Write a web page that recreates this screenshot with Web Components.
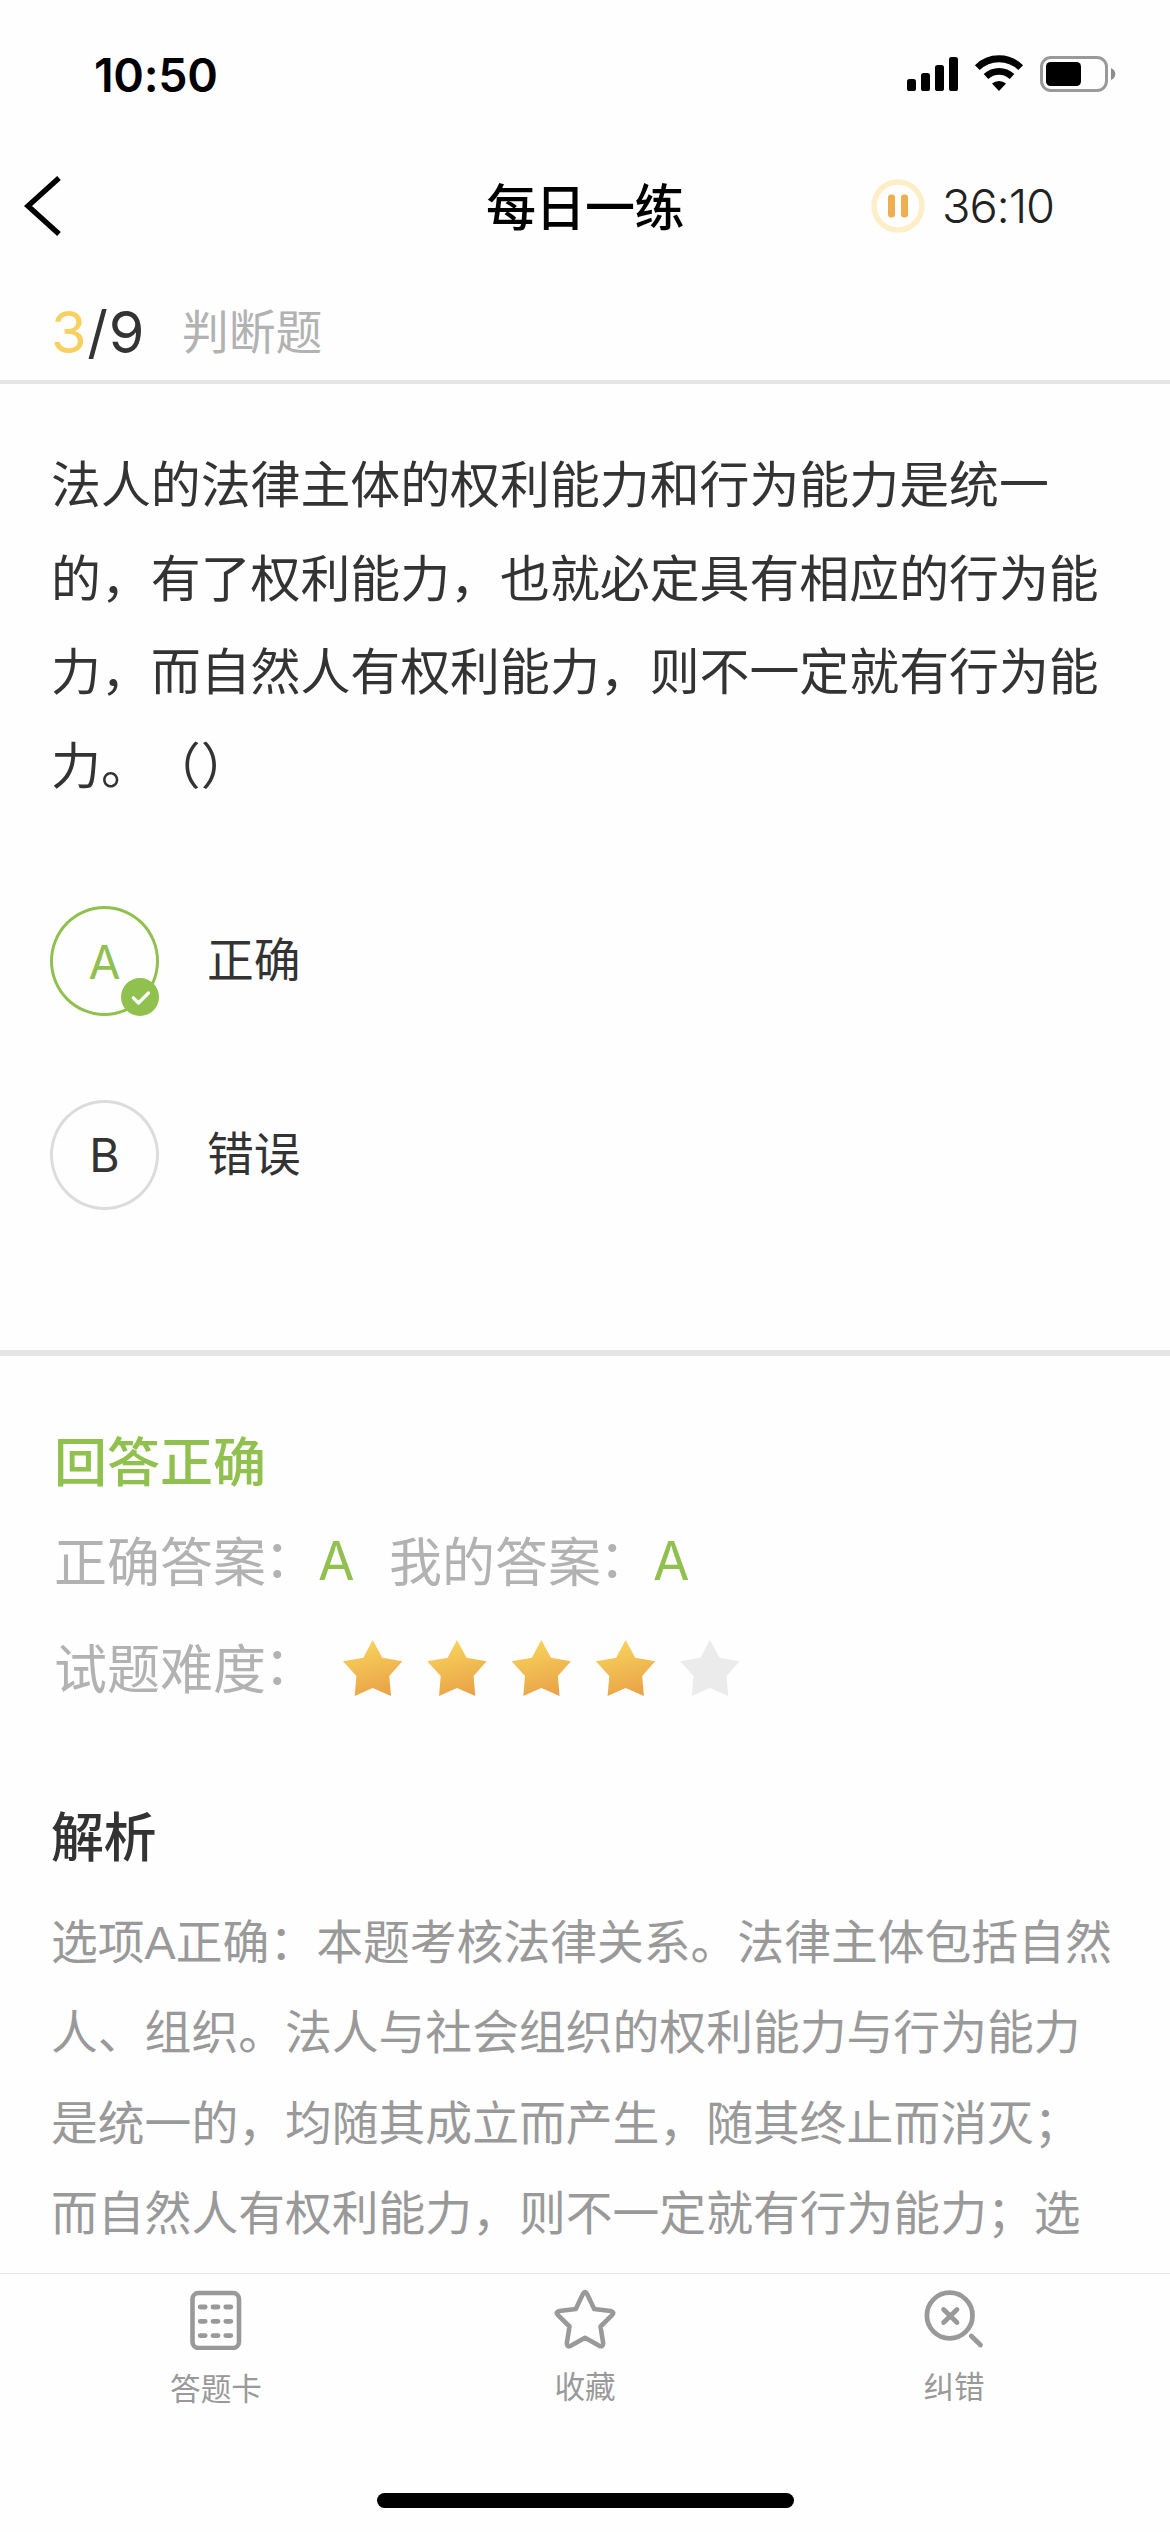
<!DOCTYPE html>
<html lang="zh-CN">
<head>
<meta charset="utf-8">
<title>每日一练</title>
<style>
html,body{margin:0;padding:0}
body{width:1170px;height:2532px;overflow:hidden;background:#fefefe;color:#333;font-family:Inter,"Noto Sans CJK SC",sans-serif}
</style>
</head>
<body>
<quiz-page></quiz-page>
<script>
function define(name, html) {
  const t = document.createElement('template');
  t.innerHTML = html;
  customElements.define(name, class extends HTMLElement {
    constructor() {
      super();
      this.attachShadow({mode: 'open'}).appendChild(t.content.cloneNode(true));
    }
  });
}

define('status-bar', `
<style>
:host{display:flex;justify-content:space-between;align-items:center;box-sizing:border-box;height:148px;padding:0 54px 0 94px;color:#000}
.time{font-size:46.5px;font-weight:600;line-height:60px;letter-spacing:-.3px;padding-top:1px}
svg{display:block}
</style>
<span class="time"><slot></slot></span>
<svg width="210" height="38" viewBox="906 55 210 38">
  <g fill="#000">
    <rect x="907" y="79" width="9" height="12" rx="2.6"/><rect x="921" y="73" width="9" height="18" rx="2.6"/>
    <rect x="935" y="65" width="9" height="26" rx="2.6"/><rect x="949" y="57" width="9" height="34" rx="2.6"/>
    <path d="M999 91 L992 83.6 A10.5 10.5 0 0 1 1006 83.6Z"/>
  </g>
  <g fill="none" stroke="#000" stroke-width="6.8">
    <path d="M986 76.5 A19 19 0 0 1 1012 76.5"/>
    <path d="M977.3 67.6 A31 31 0 0 1 1020.7 67.6"/>
  </g>
  <rect x="1041.5" y="57.5" width="65" height="33" rx="9.5" fill="none" stroke="#999" stroke-width="3"/>
  <rect x="1046" y="62" width="35" height="24" rx="4.5" fill="#000"/>
  <path d="M1111 68 Q1115.3 70 1115.3 74 T1111 80Z" fill="#8c8c8c"/>
</svg>`);

define('nav-bar', `
<style>
:host{display:grid;grid-template-columns:1fr auto 1fr;align-items:center;height:116px}
svg{display:block}
.back{padding-left:20px}
.title{font-size:50px;font-weight:500;line-height:60px;color:#000;letter-spacing:-.5px;padding-top:3px}
.timer{display:flex;align-items:center;gap:17px;padding-left:187px;font-size:47px;line-height:60px;color:#222;font-weight:350;letter-spacing:-1.1px}
</style>
<div class="back"><svg width="44" height="64" viewBox="20 174 44 64"><path d="M59 178 L28 206 L59 234" fill="none" stroke="#000" stroke-width="5.4"/></svg></div>
<div class="title"><slot></slot></div>
<div class="timer">
  <svg width="54" height="54" viewBox="0 0 54 54"><circle cx="27" cy="27" r="24" fill="none" stroke="#fdeec8" stroke-width="5.4"/><rect x="17" y="15.5" width="7" height="23" rx="3" fill="#eeb04f"/><rect x="30" y="15.5" width="7" height="23" rx="3" fill="#eeb04f"/></svg>
  <slot name="time"></slot>
</div>`);

define('question-counter', `
<style>
:host{display:flex;align-items:center;box-sizing:border-box;height:120px;padding:19px 0 0 51px;border-bottom:4px solid #e5e5e5}
.n{font-size:57.5px;font-weight:400;line-height:70px;white-space:nowrap;letter-spacing:.8px;width:96px}
::slotted([slot=current]){color:#f7d060}
.kind{font-size:46.8px;line-height:60px;color:#b2b2b2;margin-left:35px}
</style>
<div class="n"><slot name="current"></slot>/<slot name="total"></slot></div><div class="kind"><slot></slot></div>`);

define('question-text', `
<style>:host{display:block;width:1064px;padding:55px 0 0 51px;font-size:49.9px;line-height:93.7px;height:467px;text-spacing-trim:space-all}</style><slot></slot>`);

define('answer-option', `
<style>
:host{display:flex;align-items:center;gap:48px;height:110px;padding-left:50px;margin-bottom:83.5px;font-size:46.8px;line-height:60px}
.ring{position:relative;box-sizing:border-box;width:109px;height:110px;border:3px solid #dcdcdc;border-radius:50%;display:flex;align-items:center;justify-content:center;font-size:46.5px;padding-top:1px}
:host([correct]) .ring{border-color:#90c04e;color:#90c04e}
.label{padding-bottom:2px}
svg{display:none;position:absolute;right:-3px;bottom:-3px}
:host([correct]) svg{display:block}
</style>
<div class="ring"><slot name="key"></slot><svg width="38" height="38" viewBox="0 0 38 38"><circle cx="19" cy="19" r="19" fill="#90c04e"/><path d="M12.3 19.8 L17.5 25 L27.5 15" fill="none" stroke="#fff" stroke-width="3.3" stroke-linecap="round" stroke-linejoin="round"/></svg></div>
<span class="label"><slot></slot></span>`);

define('star-rating', `
<style>:host{display:block}svg{display:block}</style>
<svg width="398" height="60" viewBox="0 0 398 60">
<defs><linearGradient id="g" x1=".35" y1="0" x2=".65" y2="1"><stop offset="0" stop-color="#f8d45d"/><stop offset="1" stop-color="#e9a246"/></linearGradient>
<path id="s" d="M29.7 1 L39.3 18.7 L59.3 22.3 L46.3 37 L48 57 L29.7 49 L11.7 57 L13.4 37 L0 22.3 L20.3 18.7Z"/></defs>
<use href="#s" fill="url(#g)"/><use href="#s" x="84.3" fill="url(#g)"/><use href="#s" x="168.6" fill="url(#g)"/><use href="#s" x="252.9" fill="url(#g)"/><use href="#s" x="337.2" fill="#ebebeb"/>
</svg>`);

define('answer-result', `
<style>
:host{display:block;box-sizing:border-box;height:424px;border-top:6px solid #e5e5e5;padding:63px 0 0 54px;font-size:53px;color:#b2b2b2;text-spacing-trim:space-all}
div{display:flex;align-items:center;height:80px;white-space:nowrap}
.state{color:#90c04e;font-weight:500}
.answers{margin-top:20px}
.level{margin-top:27px}
i{font-style:normal;transform:translate(-2px,-4px)}
b{font-weight:400;color:#90c04e;width:36px;margin:4px 35px 0 -1px}
star-rating{margin:6px 0 0 24px}
</style>
<div class="state"><slot name="state"></slot></div>
<div class="answers">正确答案<i>：</i><b><slot name="right"></slot></b>我的答案<i>：</i><b><slot name="mine"></slot></b></div>
<div class="level">试题难度<i>：</i><star-rating></star-rating></div>`);

define('answer-analysis', `
<style>
:host{display:block;padding:24px 0 0 51px;text-spacing-trim:space-all}
h2{margin:0;font-size:53px;line-height:80px;font-weight:500;color:#333;letter-spacing:-.5px}
p{margin:20px 0 0;width:1070px;font-family:"Liberation Sans","Noto Sans CJK SC",sans-serif;font-size:46.8px;line-height:90.4px;color:#999}
</style>
<h2>解析</h2><p><slot></slot></p>`);

define('analysis-text', `
<style>:host{display:inline;font-family:"Liberation Sans","Noto Sans CJK SC",sans-serif}</style><slot></slot>`);

define('tab-item', `
<style>
:host{display:flex;flex-direction:column;align-items:center;font-size:30.6px;line-height:40px;color:#999}
.icon{height:61px;margin-bottom:17.5px}
</style>
<div class="icon"><slot name="icon"></slot></div><slot></slot>`);

define('tab-bar', `
<style>
:host{display:flex;flex-direction:column;align-items:center;box-sizing:border-box;height:259px;border-top:1px solid #e5e5e5;background:#fefefe}
nav{display:grid;grid-template-columns:repeat(3,369px);width:1107px;height:219px;padding-top:16px;box-sizing:border-box}
svg{display:block}
.home{width:417px;height:15px;border-radius:8px;background:#000}
.up{margin-top:-1.7px}
</style>
<nav>
<tab-item><svg slot="icon" width="52" height="60" viewBox="0 0 52 60" fill="none" stroke="#999"><rect x="2.5" y="3" width="46.5" height="55" rx="6" stroke-width="4.6"/><path d="M10.2 17h5M23 17h5M35.8 17h5M10.2 31.3h5M23 31.3h5M35.8 31.3h5M10.2 45.6h5M23 45.6h5M35.8 45.6h5" stroke-width="4.8" stroke-linecap="round"/></svg>答题卡</tab-item>
<tab-item class="up"><svg slot="icon" width="62" height="61" viewBox="0 0 62 61" fill="none" stroke="#999" stroke-width="4.6" stroke-linejoin="round"><path d="M28.9 6 Q31 1.9 33.1 6 L40.2 21 L56.6 23 Q61 24 58 27.2 L46.5 38.5 L49.2 55.3 Q49 59.3 45.2 57.8 L31 49.7 L16.8 57.8 Q13 59.3 12.8 55.3 L15.5 38.5 L4 27.2 Q1 24 5.4 23 L21.8 21Z"/></svg>收藏</tab-item>
<tab-item class="up"><svg slot="icon" width="60" height="61" viewBox="0 0 60 61" fill="none" stroke="#999" stroke-width="4.8" stroke-linecap="round"><circle cx="25.7" cy="27.5" r="22.8"/><path d="M19.6 21.5 L33 34.5 M33 21.5 L19.6 34.5 M47.3 48 L56.5 57"/></svg>纠错</tab-item>
</nav>
<div class="home"></div>`);

define('quiz-page', `
<style>
:host{display:flex;flex-direction:column;width:1170px;height:2532px;overflow:hidden}
main{flex:1;min-height:0;overflow:hidden}
.options{height:444px;display:block}
</style>
<status-bar>10:50</status-bar>
<nav-bar>每日一练<span slot="time">36:10</span></nav-bar>
<question-counter><span slot="current">3</span><span slot="total">9</span>判断题</question-counter>
<main>
<question-text>法人的法律主体的权利能力和行为能力是统一的，有了权利能力，也就必定具有相应的行为能力，而自然人有权利能力，则不一定就有行为能力。（）</question-text>
<div class="options">
<answer-option correct><span slot="key">A</span>正确</answer-option>
<answer-option><span slot="key">B</span>错误</answer-option>
</div>
<answer-result><span slot="state">回答正确</span><span slot="right">A</span><span slot="mine">A</span></answer-result>
<answer-analysis><analysis-text>选项A正确：本题考核法律关系。法律主体包括自然人、组织。法人与社会组织的权利能力与行为能力是统一的，均随其成立而产生，随其终止而消灭；而自然人有权利能力，则不一定就有行为能力；选</analysis-text></answer-analysis>
</main>
<tab-bar></tab-bar>`);
</script>
</body>
</html>
